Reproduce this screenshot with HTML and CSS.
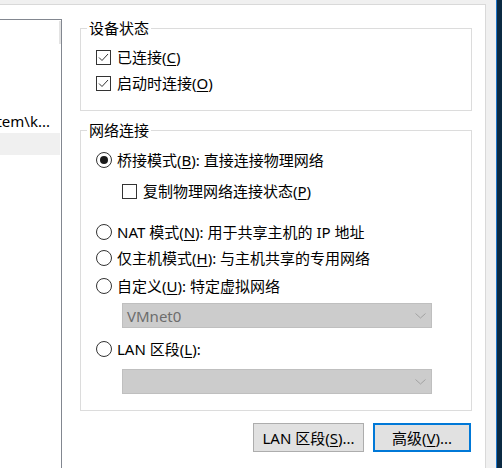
FILE: index.html
```html
<!DOCTYPE html>
<html lang="zh-CN">
<head>
    <meta charset="UTF-8">
    <title>网络适配器</title>
    <link rel="stylesheet" href="styles.css">
</head>
<body>

<div class="screen">
    <div class="tabpage">
        <!-- 左侧设备列表 -->
        <div class="list">
            <div class="list-thumb"></div>
            <div class="list-item">tem\k...</div>
            <div class="list-item selected"></div>
        </div>

        <div class="panel">
            <!-- 设备状态 -->
            <fieldset class="group group-state">
                <legend>设备状态</legend>
                <label class="row">
                    <span class="check"><svg width="13" height="13" viewBox="0 0 13 13"><polyline points="2,6.5 5,9.5 11,3" fill="none" stroke="#333" stroke-width="1"/></svg></span>
                    <span class="text">已连接(<u>C</u>)</span>
                </label>
                <label class="row">
                    <span class="check"><svg width="13" height="13" viewBox="0 0 13 13"><polyline points="2,6.5 5,9.5 11,3" fill="none" stroke="#333" stroke-width="1"/></svg></span>
                    <span class="text">启动时连接(<u>O</u>)</span>
                </label>
            </fieldset>

            <!-- 网络连接 -->
            <fieldset class="group group-net">
                <legend>网络连接</legend>
                <label class="row row-bridge">
                    <span class="radio"><span class="dot"></span></span>
                    <span class="text">桥接模式(<u>B</u>): 直接连接物理网络</span>
                </label>
                <label class="row row-sub">
                    <span class="check"></span>
                    <span class="text">复制物理网络连接状态(<u>P</u>)</span>
                </label>
                <label class="row row-nat">
                    <span class="radio"></span>
                    <span class="text">NAT 模式(<u>N</u>): 用于共享主机的 IP 地址</span>
                </label>
                <label class="row">
                    <span class="radio"></span>
                    <span class="text">仅主机模式(<u>H</u>): 与主机共享的专用网络</span>
                </label>
                <label class="row row-custom">
                    <span class="radio"></span>
                    <span class="text">自定义(<u>U</u>): 特定虚拟网络</span>
                </label>
                <div class="combo combo-vmnet">
                    <span>VMnet0</span>
                    <svg width="11" height="6" viewBox="0 0 11 6"><polyline points="0.5,0.5 5.5,5 10.5,0.5" fill="none" stroke="#a2a2a2" stroke-width="1"/></svg>
                </div>
                <label class="row row-lan">
                    <span class="radio"></span>
                    <span class="text">LAN 区段(<u>L</u>):</span>
                </label>
                <div class="combo combo-lan">
                    <span></span>
                    <svg width="11" height="6" viewBox="0 0 11 6"><polyline points="0.5,0.5 5.5,5 10.5,0.5" fill="none" stroke="#a2a2a2" stroke-width="1"/></svg>
                </div>
            </fieldset>

            <div class="buttons">
                <button type="button" class="btn btn-lan">LAN 区段(<u>S</u>)...</button>
                <button type="button" class="btn btn-default">高级(<u>V</u>)...</button>
            </div>
        </div>
    </div>
    <div class="gutter"></div>
    <div class="desktop"></div>
</div>

</body>
</html>
```

FILE: styles.css
```css
/* Estilos gerais */
body {
    margin: 0;
    background: #f0f0f0;
    font-family: "Noto Sans", "Noto Sans CJK SC", sans-serif;
    font-size: 15px;
    color: #000;
}

.screen {
    display: flex;
    width: 502px;
    height: 468px;
    overflow: hidden;
}

.tabpage {
    width: 486px;
    height: 464px;
    margin-top: 4px;
    box-sizing: border-box;
    background: #fff;
    border-top: 1px solid #d9d9d9;
    border-right: 1px solid #d9d9d9;
    display: flex;
    align-items: flex-start;
    overflow: hidden;
}

.gutter {
    width: 10px;
}

.desktop {
    width: 6px;
    box-sizing: border-box;
    background: #0b2a43;
    border-left: 1px solid #1d74c8;
}

/* lista da esquerda */
.list {
    width: 62px;
    align-self: stretch;
    margin-top: 14px;
    box-sizing: border-box;
    border-top: 1px solid #828790;
    border-right: 1px solid #828790;
    display: flex;
    flex-direction: column;
}

.list-thumb {
    align-self: flex-end;
    width: 2px;
    height: 23px;
    margin-top: 1px;
    background: #e3e3e3;
}

.list-item {
    height: 22px;
    margin-top: 66px;
    padding-right: 11px;
    display: flex;
    justify-content: flex-end;
    align-items: center;
    white-space: nowrap;
}

.list-item.selected {
    margin-top: 1px;
    margin-right: 1px;
    background: #f0f0f0;
}

/* painel */
.panel {
    width: 392px;
    margin-left: 18px;
    display: flex;
    flex-direction: column;
}

.group {
    margin: 0;
    padding: 0 6px;
    border: 1px solid #dcdcdc;
    min-width: 0;
}

.group legend {
    padding: 0 2px;
    line-height: 21px;
}

.group-state {
    margin-top: 13px;
    padding-bottom: 14px;
}

.group-state .row:first-of-type {
    margin-top: 5px;
}

.group-net {
    margin-top: 9px;
    padding-bottom: 16px;
}

.row {
    height: 26px;
    padding-left: 9px;
    display: flex;
    align-items: center;
}

.text {
    white-space: nowrap;
    line-height: 20px;
}

.text u {
    text-decoration-thickness: 1px;
    text-underline-offset: 2px;
}

.row-bridge {
    margin-top: 6px;
}

.row-sub {
    margin-top: 5px;
    padding-left: 35px;
}

.row-nat {
    margin-top: 15px;
}

.row-custom {
    margin-top: 2px;
}

.row-lan {
    margin-top: 8px;
}

.check {
    width: 15px;
    height: 15px;
    margin-right: 6px;
    box-sizing: border-box;
    border: 1px solid #333;
    background: #fff;
    display: flex;
    align-items: center;
    justify-content: center;
    flex-shrink: 0;
}

.radio {
    width: 16px;
    height: 16px;
    margin-right: 5px;
    box-sizing: border-box;
    border: 1px solid #333;
    border-radius: 50%;
    display: flex;
    align-items: center;
    justify-content: center;
    flex-shrink: 0;
}

.radio .dot {
    width: 8px;
    height: 8px;
    border-radius: 50%;
    background: #1a1a1a;
}

.combo {
    width: 310px;
    height: 25px;
    margin-left: 35px;
    padding: 0 5px 0 4px;
    box-sizing: border-box;
    background: #cccccc;
    border: 1px solid #bfbfbf;
    color: #6d6d6d;
    display: flex;
    align-items: center;
    justify-content: space-between;
}

.combo-vmnet {
    margin-top: 4px;
}

.combo-lan {
    margin-top: 7px;
}

/* botões */
.buttons {
    margin-top: 12px;
    margin-right: 1px;
    display: flex;
    justify-content: flex-end;
    gap: 9px;
}

.btn {
    height: 29px;
    padding: 0;
    box-sizing: border-box;
    background: #e1e1e1;
    border: 1px solid #adadad;
    font: inherit;
    color: #000;
    cursor: pointer;
}

.btn u {
    text-underline-offset: 2px;
}

.btn-lan {
    width: 111px;
}

.btn-default {
    width: 98px;
    border: 2px solid #0078d7;
}
```
